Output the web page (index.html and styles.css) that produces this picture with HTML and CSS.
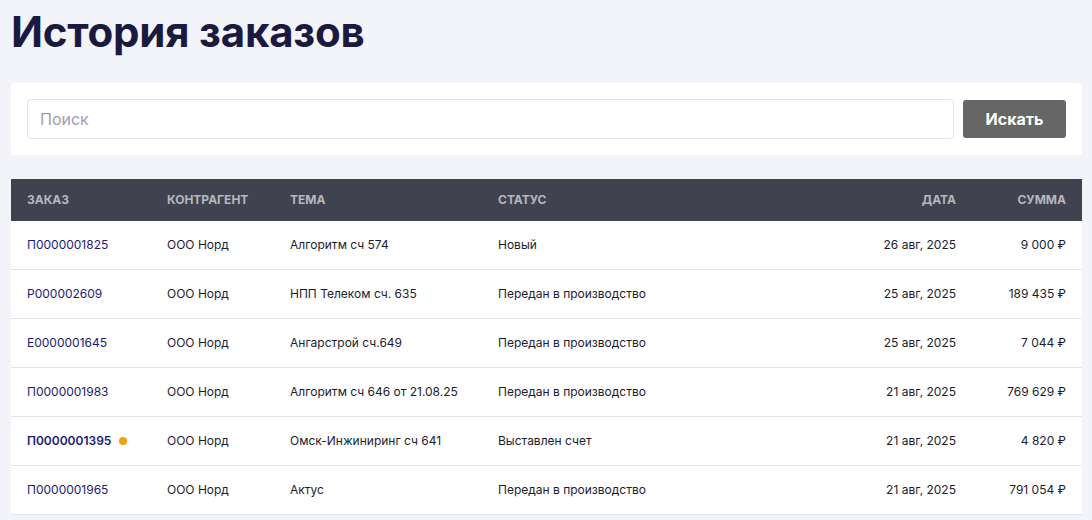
FILE: index.html
```html
<!DOCTYPE html>
<html lang="ru">
<head>
<meta charset="utf-8">
<title>История заказов</title>
<link rel="stylesheet" href="styles.css">
</head>
<body>
<main class="page">
  <h1 class="title">История заказов</h1>
  <form class="search-card">
    <input class="search-input" type="text" placeholder="Поиск">
    <button class="search-btn" type="button">Искать</button>
  </form>
  <table class="orders">
    <colgroup>
      <col class="c-order"><col class="c-agent"><col class="c-topic"><col class="c-status"><col class="c-date"><col class="c-sum">
    </colgroup>
    <thead>
      <tr>
        <th>Заказ</th><th>Контрагент</th><th>Тема</th><th>Статус</th><th class="r">Дата</th><th class="r">Сумма</th>
      </tr>
    </thead>
    <tbody>
      <tr><td><a class="link" href="#">П0000001825</a></td><td>ООО Норд</td><td>Алгоритм сч 574</td><td>Новый</td><td class="r">26 авг, 2025</td><td class="r">9 000 ₽</td></tr>
      <tr><td><a class="link" href="#">Р000002609</a></td><td>ООО Норд</td><td>НПП Телеком сч. 635</td><td>Передан в производство</td><td class="r">25 авг, 2025</td><td class="r">189 435 ₽</td></tr>
      <tr><td><a class="link" href="#">Е0000001645</a></td><td>ООО Норд</td><td>Ангарстрой сч.649</td><td>Передан в производство</td><td class="r">25 авг, 2025</td><td class="r">7 044 ₽</td></tr>
      <tr><td><a class="link" href="#">П0000001983</a></td><td>ООО Норд</td><td>Алгоритм сч 646 от 21.08.25</td><td>Передан в производство</td><td class="r">21 авг, 2025</td><td class="r">769 629 ₽</td></tr>
      <tr><td><a class="link unread" href="#">П0000001395</a><span class="dot"></span></td><td>ООО Норд</td><td>Омск-Инжиниринг сч 641</td><td>Выставлен счет</td><td class="r">21 авг, 2025</td><td class="r">4 820 ₽</td></tr>
      <tr><td><a class="link" href="#">П0000001965</a></td><td>ООО Норд</td><td>Актус</td><td>Передан в производство</td><td class="r">21 авг, 2025</td><td class="r">791 054 ₽</td></tr>
    </tbody>
  </table>
</main>
</body>
</html>
```

FILE: styles.css
```css
* { box-sizing: border-box; }
html, body { margin: 0; padding: 0; }
body {
  background: #f3f4f9;
  font-family: Inter, "Noto Sans", sans-serif;
  color: #1c1c30;
}
.page {
  padding: 0 10px 0 11px;
}
.title {
  margin: 0;
  padding-top: 5px;
  font-size: 42px;
  line-height: 53px;
  font-weight: 700;
  color: #1a1a40;
  letter-spacing: -0.2px;
}
.search-card {
  margin: 25px 0 24px;
  background: #fff;
  border-radius: 4px;
  padding: 16px;
  display: flex;
  gap: 9px;
}
.search-input {
  flex: 1;
  height: 40px;
  border: 1px solid #e2e1ee;
  border-radius: 4px;
  padding: 0 12px;
  font-family: inherit;
  font-size: 16px;
  color: #1f1f33;
  outline: none;
}
.search-input::placeholder { color: #9e9db3; }
.search-btn {
  width: 103px;
  height: 38px;
  margin-top: 1px;
  border: 0;
  border-radius: 3px;
  background: #666666;
  color: #fff;
  font-family: inherit;
  font-size: 16px;
  font-weight: 700;
}
.orders {
  width: 100%;
  border-collapse: collapse;
  table-layout: fixed;
  background: #fff;
  font-size: 12px;
}
.c-order { width: 140px; }
.c-agent { width: 123px; }
.c-topic { width: 208px; }
.c-date { width: 150px; }
.c-sum { width: 110px; }
.orders th {
  background: #40424f;
  color: #b6b7bf;
  font-size: 12px;
  font-weight: 700;
  text-transform: uppercase;
  text-align: left;
  padding: 13px 16px;
  line-height: 16px;
}
.orders td {
  padding: 16px;
  line-height: 16px;
  border-bottom: 1px solid #e4e4ee;
  white-space: nowrap;
}
.orders .r { text-align: right; }
.link {
  color: #1c1a78;
  text-decoration: none;
}
.link.unread { font-weight: 600; }
.dot {
  display: inline-block;
  width: 8px;
  height: 8px;
  border-radius: 50%;
  background: #f0a30a;
  margin-left: 8px;
  vertical-align: 0;
}
```
